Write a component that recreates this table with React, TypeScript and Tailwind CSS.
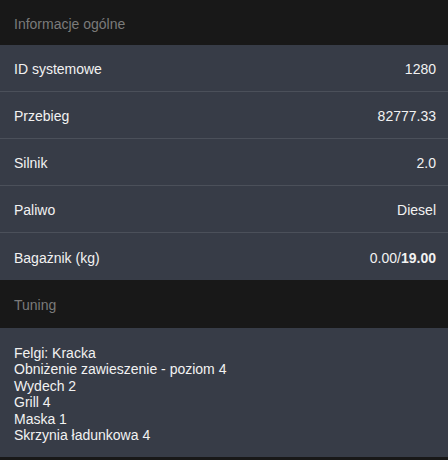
const general = [
  { label: "ID systemowe", value: "1280" },
  { label: "Przebieg", value: "82777.33" },
  { label: "Silnik", value: "2.0" },
  { label: "Paliwo", value: "Diesel" },
];

const tuning = [
  "Felgi: Kracka",
  "Obniżenie zawieszenie - poziom 4",
  "Wydech 2",
  "Grill 4",
  "Maska 1",
  "Skrzynia ładunkowa 4",
];

export default function App() {
  return (
    <div className="w-[448px] h-[460px] overflow-hidden bg-[#181818] font-['Liberation_Sans',Arial,sans-serif] text-[14px] text-[#f2f2f2]">
      <div className="h-[45px] flex items-center px-[14px] pt-[3px] text-[#7b7b7b]">Informacje ogólne</div>

      {general.map((row) => (
        <div
          key={row.label}
          className="h-[47px] flex items-center justify-between pl-[14px] pr-[12px] pt-[3px] bg-[#373c47] border-b border-[#4b505a]"
        >
          <span>{row.label}</span>
          <span>{row.value}</span>
        </div>
      ))}
      <div className="h-[47px] flex items-center justify-between pl-[14px] pr-[12px] pt-[3px] bg-[#373c47]">
        <span>Bagażnik (kg)</span>
        <span>
          0.00/<b className="font-bold">19.00</b>
        </span>
      </div>

      <div className="h-[48px] flex items-center px-[14px] pt-[3px] text-[#7b7b7b]">Tuning</div>

      <div className="h-[129px] bg-[#373c47] pl-[14px] pt-[17px] leading-[16.4px]">
        {tuning.map((item) => (
          <div key={item}>{item}</div>
        ))}
      </div>
    </div>
  );
}
